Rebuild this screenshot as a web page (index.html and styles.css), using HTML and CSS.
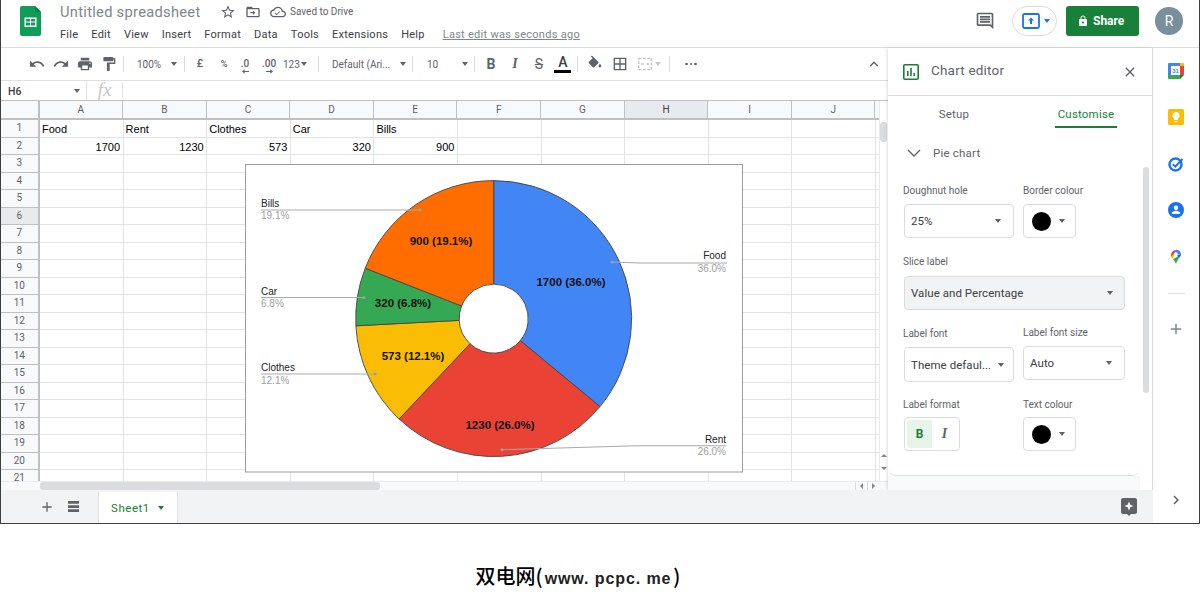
FILE: index.html
```html
<!DOCTYPE html>
<html lang="en">
<head>
<meta charset="utf-8">
<title>Untitled spreadsheet</title>
<link rel="stylesheet" href="styles.css">
</head>
<body>
<div class="app">
  <header class="header">
    <svg class="logo" viewBox="0 0 21 30"><path fill="#0f9d58" d="M2 0h13l6 6v22a2 2 0 0 1-2 2H2a2 2 0 0 1-2-2V2a2 2 0 0 1 2-2z"/><path fill="#0b8043" d="M15 0l6 6h-6z"/><path fill="#fff" d="M4.500 11.500h12v9.500h-12zM6 13v2.500h4V13zm5 0v2.500h4V13zM6 16.500V19.500h4v-3zm5 0V19.500h4v-3z" fill-rule="evenodd"/></svg>
    <div class="doc">
      <div class="doc-top">
        <span class="doc-title">Untitled spreadsheet</span>
        <svg class="ic16 star" viewBox="0 0 24 24"><path d="M22 9.240l-7.190-.62L12 2 9.190 8.630 2 9.240l5.460 4.730L5.820 21 12 17.270 18.180 21l-1.630-7.030L22 9.240zM12 15.400l-3.760 2.270 1-4.280-3.320-2.880 4.380-.38L12 6.100l1.710 4.040 4.380.38-3.320 2.880 1 4.280L12 15.400z"/></svg>
        <svg class="ic16 move" viewBox="0 0 24 24"><path d="M20 6h-8l-2-2H4c-1.100 0-2 .9-2 2v12c0 1.100.9 2 2 2h16c1.100 0 2-.9 2-2V8c0-1.100-.9-2-2-2zm0 12H4V8h16v10z"/><path d="M12 9.500l3.500 3.500-3.500 3.500V14H8v-2h4z"/></svg>
        <svg class="ic16 cloud" viewBox="0 0 24 24"><path d="M19.350 10.040C18.670 6.590 15.640 4 12 4 9.110 4 6.600 5.640 5.350 8.040 2.340 8.360 0 10.910 0 14c0 3.310 2.690 6 6 6h13c2.760 0 5-2.240 5-5 0-2.640-2.050-4.780-4.650-4.960zM19 18H6c-2.210 0-4-1.790-4-4s1.790-4 4-4h.71C7.370 7.690 9.480 6 12 6c3.040 0 5.500 2.460 5.500 5.500v.5H19c1.660 0 3 1.340 3 3s-1.340 3-3 3z"/><path d="M10 15l-2.200-2.200-1 1L10 17l5.200-5.200-1-1z"/></svg>
        <span class="saved">Saved to Drive</span>
      </div>
      <nav class="menu">
        <span>File</span><span>Edit</span><span>View</span><span>Insert</span><span>Format</span><span>Data</span><span>Tools</span><span>Extensions</span><span>Help</span>
        <a class="last-edit">Last edit was seconds ago</a>
      </nav>
    </div>
    <div class="actions">
      <svg class="comment" viewBox="0 0 24 24"><path d="M21.990 4c0-1.100-.89-2-1.990-2H4c-1.100 0-2 .9-2 2v12c0 1.100.9 2 2 2h14l4 4-.01-18zM20 4v13.170L18.830 16H4V4h16zM6 12h12v2H6zm0-3h12v2H6zm0-3h12v2H6z"/></svg>
      <div class="present">
        <svg class="present-ic" viewBox="0 0 18 16"><rect x="1" y="1" width="16" height="14" rx="1.500" fill="none" stroke="#1a73e8" stroke-width="1.800"/><path fill="#1a73e8" d="M9 4.500l3 3H10v3.500H8V7.500H6z"/></svg>
        <span class="caret blue"></span>
      </div>
      <div class="share">
        <svg class="lock" viewBox="0 0 24 24"><path d="M18 8h-1V6c0-2.760-2.240-5-5-5S7 3.240 7 6v2H6c-1.100 0-2 .9-2 2v10c0 1.100.9 2 2 2h12c1.100 0 2-.9 2-2V10c0-1.100-.9-2-2-2zm-6 9c-1.100 0-2-.9-2-2s.9-2 2-2 2 .9 2 2-.9 2-2 2zm3.100-9H8.900V6c0-1.710 1.390-3.100 3.100-3.100 1.710 0 3.100 1.390 3.100 3.100v2z"/></svg>
        <span>Share</span>
      </div>
      <div class="avatar">R</div>
    </div>
  </header>

  <div class="body">
    <div class="main">
      <div class="content">
        <section class="sheet">
          <div class="toolbar">
            <svg class="tb ic" viewBox="-5 -5 34 34"><path d="M12.500 8c-2.650 0-5.050.99-6.900 2.600L2 7v9h9l-3.620-3.620c1.390-1.160 3.160-1.880 5.120-1.880 3.540 0 6.550 2.310 7.600 5.500l2.370-.78C21.080 11.030 17.150 8 12.500 8z"/></svg>
            <svg class="tb ic" viewBox="-5 -5 34 34"><path d="M18.400 10.600C16.550 8.990 14.150 8 11.500 8c-4.650 0-8.580 3.030-9.960 7.220L3.900 16c1.050-3.190 4.050-5.500 7.600-5.500 1.950 0 3.730.72 5.120 1.880L13 16h9V7l-3.600 3.600z"/></svg>
            <svg class="tb ic" viewBox="-5 -5 34 34"><path d="M19 8H5c-1.660 0-3 1.340-3 3v6h4v4h12v-4h4v-6c0-1.660-1.340-3-3-3zm-3 11H8v-5h8v5zm3-7c-.55 0-1-.45-1-1s.45-1 1-1 1 .45 1 1-.45 1-1 1zm-1-9H6v4h12V3z"/></svg>
            <svg class="tb ic" viewBox="-5 -5 34 34"><path d="M18 4V3c0-.55-.45-1-1-1H5c-.55 0-1 .45-1 1v4c0 .55.45 1 1 1h12c.55 0 1-.45 1-1V6h1v4H9v11c0 .55.45 1 1 1h2c.55 0 1-.45 1-1v-9h8V4h-3z"/></svg>
            <i class="sep s-a"></i>
            <div class="drop d-zoom"><span>100%</span><span class="caret"></span></div>
            <i class="sep"></i>
            <span class="tb txt t-first">£</span>
            <span class="tb txt small">%</span>
            <span class="tb txt dec d1">.0<svg class="dec-arrow" viewBox="0 0 8 5"><path d="M0 2.500L3 0v2h5v1H3v2z"/></svg></span>
            <span class="tb txt dec">.00<svg class="dec-arrow" viewBox="0 0 8 5"><path d="M8 2.500L5 0v2H0v1h5v2z"/></svg></span>
            <span class="fmt">123<span class="caret"></span></span>
            <i class="sep"></i>
            <div class="drop d-font"><span>Default (Ari...</span><span class="caret"></span></div>
            <i class="sep"></i>
            <div class="drop d-size"><span>10</span><span class="caret"></span></div>
            <i class="sep"></i>
            <span class="tb txt fmt-b">B</span>
            <span class="tb txt fmt-i">I</span>
            <span class="tb txt fmt-s">S</span>
            <span class="tb txt fmt-a">A</span>
            <i class="sep s-b"></i>
            <svg class="tb ic" viewBox="-5 -5 34 34"><path d="M16.560 8.940L7.620 0 6.210 1.410l2.380 2.380-5.150 5.150c-.59.59-.59 1.540 0 2.120l5.500 5.500c.29.29.68.44 1.060.44s.77-.15 1.060-.44l5.500-5.500c.59-.58.59-1.530 0-2.120zM19 11.500s-2 2.170-2 3.500c0 1.100.9 2 2 2s2-.9 2-2c0-1.330-2-3.500-2-3.500z"/></svg>
            <svg class="tb ic bord" viewBox="-5 -5 34 34"><path d="M3 3v18h18V3H3zm8 16H5v-6h6v6zm0-8H5V5h6v6zm8 8h-6v-6h6v6zm0-8h-6V5h6v6z"/></svg>
            <svg class="tb merge" viewBox="-5 -5 34 34"><path fill="none" stroke="#c4c7c9" stroke-width="2" stroke-dasharray="4 2" d="M3 4h18v16H3z"/><path fill="none" stroke="#c4c7c9" stroke-width="2" d="M6 12h4M14 12h4"/></svg>
            <span class="caret faint"></span>
            <i class="sep s-c"></i>
            <span class="dots"><i></i><i></i><i></i></span>
            <svg class="tb ic collapse" viewBox="-5 -5 34 34"><path d="M7.410 15.410L12 10.830l4.590 4.580L18 14l-6-6-6 6z"/></svg>
          </div>
          <div class="formula">
            <div class="namebox"><span>H6</span><span class="caret"></span></div>
            <span class="fx">fx</span>
          </div>
          <div class="gridwrap">
            <div class="grid">
              <div class="colheads">
                <div class="corner"></div>
                <div class="ch">A</div><div class="ch">B</div><div class="ch">C</div><div class="ch">D</div><div class="ch">E</div><div class="ch">F</div><div class="ch">G</div><div class="ch sel">H</div><div class="ch">I</div><div class="ch">J</div>
              </div>
              <div class="row"><div class="rh">1</div><div class="rb"><div class="c">Food</div><div class="c">Rent</div><div class="c">Clothes</div><div class="c">Car</div><div class="c">Bills</div></div></div>
              <div class="row"><div class="rh">2</div><div class="rb"><div class="c n">1700</div><div class="c n">1230</div><div class="c n">573</div><div class="c n">320</div><div class="c n">900</div></div></div>
              <div class="row"><div class="rh">3</div><div class="rb"></div></div>
              <div class="row"><div class="rh">4</div><div class="rb"></div></div>
              <div class="row"><div class="rh">5</div><div class="rb"></div></div>
              <div class="row"><div class="rh sel">6</div><div class="rb"></div></div>
              <div class="row"><div class="rh">7</div><div class="rb"></div></div>
              <div class="row"><div class="rh">8</div><div class="rb"></div></div>
              <div class="row"><div class="rh">9</div><div class="rb"></div></div>
              <div class="row"><div class="rh">10</div><div class="rb"></div></div>
              <div class="row"><div class="rh">11</div><div class="rb"></div></div>
              <div class="row"><div class="rh">12</div><div class="rb"></div></div>
              <div class="row"><div class="rh">13</div><div class="rb"></div></div>
              <div class="row"><div class="rh">14</div><div class="rb"></div></div>
              <div class="row"><div class="rh">15</div><div class="rb"></div></div>
              <div class="row"><div class="rh">16</div><div class="rb"></div></div>
              <div class="row"><div class="rh">17</div><div class="rb"></div></div>
              <div class="row"><div class="rh">18</div><div class="rb"></div></div>
              <div class="row"><div class="rh">19</div><div class="rb"></div></div>
              <div class="row"><div class="rh">20</div><div class="rb"></div></div>
              <div class="row"><div class="rh">21</div><div class="rb"></div></div>
            </div>
            <div class="vscroll">
              <div class="vthumb"></div>
              <div class="varrows"><span class="tri up"></span><span class="tri down"></span></div>
            </div>
            <svg class="chart" viewBox="245 164 498 309">
              <rect class="frame" x="245.500" y="164.500" width="497" height="307.500"/>
              <g class="slices">
                <path fill="#4285f4" d="M493.700 180.600A138 138 0 0 1 600 406.600L520.300 340.600A34.500 34.500 0 0 0 493.700 284.100Z"/>
                <path fill="#ea4335" d="M600 406.600A138 138 0 0 1 399.100 419L470 343.700A34.500 34.500 0 0 0 520.300 340.600Z"/>
                <path fill="#fbbc04" d="M399.100 419A138 138 0 0 1 355.900 325.800L459.200 320.400A34.500 34.500 0 0 0 470 343.700Z"/>
                <path fill="#34a853" d="M355.900 325.800A138 138 0 0 1 365.200 268.200L461.600 306A34.500 34.500 0 0 0 459.200 320.400Z"/>
                <path fill="#ff6d01" d="M365.200 268.200A138 138 0 0 1 493.700 180.600V284.100A34.500 34.500 0 0 0 461.600 306Z"/>
              </g>
              <g class="leaders">
                <path d="M261 210H420"/><path d="M261 297.500H364"/><path d="M261 374H375"/><path d="M612 262L640 263H727"/><path d="M502 449.700L637 445.700H726"/>
              </g>
              <g class="ends">
                <circle cx="420" cy="210" r="1.500"/><circle cx="364" cy="297.500" r="1.500"/><circle cx="375" cy="374" r="1.500"/><circle cx="612" cy="262" r="1.500"/><circle cx="502" cy="449.700" r="1.500"/>
              </g>
              <text class="vl" x="441" y="245">900 (19.1%)</text>
              <text class="vl" x="403" y="307">320 (6.8%)</text>
              <text class="vl" x="413" y="360">573 (12.1%)</text>
              <text class="vl" x="500" y="429">1230 (26.0%)</text>
              <text class="vl" x="571" y="286">1700 (36.0%)</text>
              <text class="ln" x="261" y="207">Bills</text><text class="lp" x="261" y="219">19.1%</text>
              <text class="ln" x="261" y="295">Car</text><text class="lp" x="261" y="307">6.8%</text>
              <text class="ln" x="261" y="371">Clothes</text><text class="lp" x="261" y="384">12.1%</text>
              <text class="ln end" x="726" y="259">Food</text><text class="lp end" x="726" y="272">36.0%</text>
              <text class="ln end" x="726" y="443">Rent</text><text class="lp end" x="726" y="455">26.0%</text>
            </svg>
          </div>
          <div class="hscroll">
            <div class="hcorner"></div>
            <div class="htrack"><div class="hthumb"></div></div>
            <div class="harrow"><span class="tri left"></span></div>
            <div class="harrow"><span class="tri right"></span></div>
          </div>
        </section>

        <aside class="editor">
          <div class="ed-head">
            <svg class="ed-ic" viewBox="0 0 16 16"><rect x=".8" y=".8" width="14.400" height="14.400" rx="1" fill="none" stroke="#188038" stroke-width="1.600"/><path fill="#188038" d="M4 7h1.600v5H4zM7.200 4h1.600v8H7.200zM10.400 9H12v3h-1.600z"/></svg>
            <span class="ed-title">Chart editor</span>
            <svg class="ed-close" viewBox="0 0 24 24"><path d="M19 6.410L17.590 5 12 10.590 6.410 5 5 6.410 10.590 12 5 17.590 6.410 19 12 13.410 17.590 19 19 17.590 13.410 12z"/></svg>
          </div>
          <div class="tabs">
            <div class="tab"><span>Setup</span></div>
            <div class="tab on"><span>Customise</span></div>
          </div>
          <div class="card">
            <div class="acc">
              <svg class="acc-ic" viewBox="0 0 14 8"><path d="M1 1l6 6 6-6" fill="none" stroke="#5f6368" stroke-width="1.400"/></svg>
              <span>Pie chart</span>
            </div>
            <div class="frow">
              <div class="fld w110"><label>Doughnut hole</label><div class="sel-box pr-wide"><span>25%</span><span class="caret"></span></div></div>
              <div class="fld"><label>Border colour</label><div class="sel-box color"><i class="swatch"></i><span class="caret"></span></div></div>
            </div>
            <div class="frow tall">
              <div class="fld wide"><label>Slice label</label><div class="sel-box grey"><span>Value and Percentage</span><span class="caret"></span></div></div>
            </div>
            <div class="frow">
              <div class="fld w110"><label>Label font</label><div class="sel-box tall-box"><span>Theme defaul...</span><span class="caret"></span></div></div>
              <div class="fld w102 raised"><label>Label font size</label><div class="sel-box grey-pad"><span>Auto</span><span class="caret"></span></div></div>
            </div>
            <div class="frow tight">
              <div class="fld w110"><label>Label format</label>
                <div class="toggle"><span class="tg on">B</span><span class="tg it">I</span></div>
              </div>
              <div class="fld"><label>Text colour</label><div class="sel-box color"><i class="swatch"></i><span class="caret"></span></div></div>
            </div>
          </div>
          <div class="ed-foot"></div>
          <div class="ed-scroll"></div>
        </aside>
      </div>
      <footer class="tabsbar">
        <svg class="bar-ic plus" viewBox="0 0 24 24"><path d="M19 13h-6v6h-2v-6H5v-2h6V5h2v6h6z"/></svg>
        <svg class="bar-ic list" viewBox="0 0 12 12"><path d="M0 0h12v3H0zM0 4.500h12v3H0zM0 9h12v3H0z"/></svg>
        <div class="sheet-tab"><span>Sheet1</span><span class="caret green"></span></div>
        <svg class="explore" viewBox="0 0 16 18"><path fill="#5f6368" d="M2 0h12a2 2 0 0 1 2 2v12a2 2 0 0 1-2 2h-4l-2 2-2-2H2a2 2 0 0 1-2-2V2a2 2 0 0 1 2-2z"/><path fill="#fff" d="M8 3.500l1.300 3.200L12.500 8 9.300 9.300 8 12.500 6.700 9.300 3.500 8l3.200-1.300z"/></svg>
      </footer>
    </div>
    <aside class="sidebar">
      <svg class="app-ic" viewBox="0 0 16 16"><path fill="#4285f4" d="M1 0h11v3H3v9H0V1a1 1 0 0 1 1-1z"/><path fill="#fbbc04" d="M12 0h3a1 1 0 0 1 1 1v2h-4z"/><path fill="#ea4335" d="M12 3h4v9h-4z"/><path fill="#34a853" d="M3 12h9v4H1a1 1 0 0 1-1-1v-3z"/><path fill="#188038" d="M12 12h4l-4 4z"/><rect x="3" y="3" width="9" height="9" fill="#fff"/><text class="cal-num" x="7.500" y="10.200">31</text></svg>
      <svg class="app-ic" viewBox="0 0 16 16"><rect width="16" height="16" rx="1.500" fill="#fbbc04"/><path fill="#fff" d="M8 3a3.500 3.500 0 0 0-2 6.400V11h4V9.400A3.500 3.500 0 0 0 8 3zM6.500 12h3v1h-3z"/></svg>
      <svg class="app-ic" viewBox="0 0 16 16"><circle cx="7.500" cy="8.500" r="6" fill="none" stroke="#1a73e8" stroke-width="2.400"/><path d="M4.800 8.200l2.500 2.400L14.500 3" fill="none" stroke="#1a73e8" stroke-width="2"/></svg>
      <svg class="app-ic" viewBox="0 0 16 16"><circle cx="8" cy="8" r="8" fill="#1a73e8"/><circle cx="8" cy="5.800" r="2.200" fill="#fff"/><path fill="#fff" d="M3.800 11.500c0-1.900 2.800-2.700 4.200-2.700s4.200.8 4.200 2.700V12H3.800z"/></svg>
      <svg class="app-ic" viewBox="0 0 16 16"><path fill="#34a853" d="M8 16c-1-2.500-2-3.500-3-5l3-1.500 3-1.500c.5 1.500-.2 2.500-1 3.700C9 13 8.600 14.500 8 16z"/><path fill="#fbbc04" d="M3 8.500l3.500-3-1.500 5.500C4 10 3.300 9.500 3 8.500z"/><path fill="#ea4335" d="M3 8.500C2.500 5.500 4.500 3 6 2.500l2 1.500-2 2z"/><path fill="#4285f4" d="M6 2.500C9 .8 12.500 2.500 13 6L9.500 7z"/><path fill="#1a73e8" d="M13 6c.2 1.500-.5 2.500-2 4L9 7.500z"/><circle cx="8" cy="6" r="1.800" fill="#fff"/></svg>
      <i class="side-line"></i>
      <svg class="side-plus" viewBox="0 0 24 24"><path d="M19 13h-6v6h-2v-6H5v-2h6V5h2v6h6z"/></svg>
      <svg class="side-chev" viewBox="0 0 24 24"><path d="M10 6L8.590 7.410 13.170 12l-4.580 4.590L10 18l6-6z"/></svg>
    </aside>
  </div>
</div>
<div class="caption">双电网(<span class="cap-latin">www. pcpc. me</span>)</div>
</body>
</html>
```
FILE: styles.css
```css
* { box-sizing: border-box; }
html, body { margin: 0; padding: 0; background: #fff; }
body { width: 1200px; height: 600px; overflow: hidden; font-family: Roboto, "Liberation Sans", sans-serif; color: #3c4043; }
i { font-style: normal; display: block; }

.app { width: 1200px; height: 524px; border: 1px solid #3c4043; border-top: 0; display: flex; flex-direction: column; overflow: hidden; }

/* header */
.header { height: 48px; flex: none; border-bottom: 1px solid #dadce0; display: flex; align-items: flex-start; position: relative; }
.logo { width: 21px; height: 30px; margin: 6px 0 0 19px; flex: none; }
.doc { margin-left: 19px; padding-top: 2px; }
.doc-top { display: flex; align-items: center; height: 19px; }
.doc-title { font-size: 14.700px; letter-spacing: .28px; color: #80868b; width: 160px; }
.ic16 { width: 16px; height: 16px; fill: #5f6368; flex: none; }
.move { margin-left: 9px; }
.cloud { margin-left: 9px; }
.saved { font-size: 10px; color: #5f6368; margin-left: 4px; }
.menu { display: flex; gap: 13px; margin-top: 6px; font-size: 11px; letter-spacing: .25px; color: #3c4043; line-height: 16px; }
.last-edit { color: #80868b; text-decoration: underline; margin-left: 5px; letter-spacing: .28px; }
.actions { margin-left: auto; display: flex; align-items: center; height: 30px; margin-top: 6px; }
.comment { width: 20px; height: 20px; fill: #5f6368; margin-right: 17px; }
.present { width: 45px; height: 30px; border: 1px solid #dadce0; border-radius: 15px; display: flex; align-items: center; padding-left: 9px; margin-right: 9px; }
.present-ic { width: 18px; height: 16px; margin-right: 4px; }
.share { width: 73px; height: 30px; background: #188038; border-radius: 3px; color: #fff; font-size: 12px; font-weight: 700; display: flex; align-items: center; padding-left: 11px; margin-right: 16px; }
.lock { width: 12px; height: 12px; fill: #fff; margin-right: 4px; }
.avatar { width: 28px; height: 28px; border-radius: 50%; background: #78909c; color: #fff; font-size: 14px; display: flex; align-items: center; justify-content: center; margin-right: 16px; }

.caret { display: inline-block; width: 0; height: 0; border: 3.500px solid transparent; border-top: 4px solid #5f6368; border-bottom: 0; flex: none; }
.caret.blue { border-top-color: #1a73e8; }
.caret.green { border-top-color: #188038; }
.caret.faint { border-top-color: #c4c7c9; margin-left: -2px; }

.body { flex: 1; display: flex; min-height: 0; }
.main { width: 1152px; display: flex; flex-direction: column; }
.content { height: 442px; display: flex; }

/* sheet */
.sheet { width: 887px; flex: none; display: flex; flex-direction: column; position: relative; }
.toolbar { height: 33px; flex: none; border-bottom: 1px solid #e0e0e0; display: flex; align-items: center; padding-left: 24px; }
.tb { width: 24px; height: 24px; flex: none; display: block; }
.ic { fill: #5f6368; }
.sep { width: 1px; height: 16px; background: #dadce0; flex: none; }
.s-a { margin-left: 2px; }
.drop { display: flex; align-items: center; justify-content: space-between; font-size: 10px; color: #5f6368; flex: none; }
.d-zoom { width: 60px; padding: 0 7px 0 13px; }
.d-font { width: 93px; padding: 0 6px 0 13px; }
.d-size { width: 61px; padding: 0 6px 0 14px; }
.txt { font-size: 10px; font-weight: 500; color: #5f6368; text-align: center; line-height: 24px; position: relative; }
.t-first { margin-left: 3px; font-size: 11px; }
.small { font-size: 9px; }
.dec { font-size: 10px; line-height: 23px; }
.d1 { margin-left: -3px; }
.dec-arrow { position: absolute; width: 7px; height: 5px; left: 9px; top: 17px; fill: #5f6368; }
.fmt { display: flex; align-items: center; gap: 1px; font-size: 10px; color: #5f6368; width: 37px; flex: none; padding-left: 2px; }
.fmt-b { margin-left: 4px; font-size: 14px; font-weight: 700; }
.fmt-i { font-size: 14px; font-weight: 700; font-style: italic; font-family: "Liberation Serif", serif; }
.fmt-s { font-size: 14px; font-weight: 400; text-decoration: line-through; }
.fmt-a { font-size: 14px; font-weight: 500; color: #3c4043; line-height: 20px; }
.fmt-a::after { content: ""; position: absolute; left: 3px; top: 18px; width: 17px; height: 3px; background: #000; }
.s-b { margin-left: 2px; margin-right: 5px; }
.bord { margin-left: 1px; }
.merge { margin-left: 1px; }
.s-c { margin-left: 8px; margin-right: 9px; }
.dots { display: flex; gap: 2px; width: 24px; justify-content: center; flex: none; }
.dots i { width: 2.500px; height: 2.500px; background: #5f6368; border-radius: 50%; }
.collapse { margin-left: auto; margin-right: 2px; }

.formula { height: 20px; flex: none; border-bottom: 1px solid #c0c0c0; display: flex; align-items: center; }
.namebox { width: 86px; height: 19px; flex: none; display: flex; align-items: center; justify-content: space-between; padding: 1px 6px 0 7px; font-size: 10.500px; font-weight: 500; color: #3c4043; border-right: 1px solid #e0e0e0; }
.fx { width: 36px; height: 15px; font: italic 19px/14px "Liberation Serif", serif; color: #c8c8c8; text-align: center; border-right: 1px solid #e0e0e0; }

.gridwrap { height: 380px; flex: none; display: flex; position: relative; overflow: hidden; }
.grid { width: 878px; flex: none; overflow: hidden; }
.colheads { height: 19px; display: flex; border-bottom: 2px solid #c0c0c0; background: #f8f9fa; }
.corner { width: 38.500px; flex: none; border-right: 2px solid #c0c0c0; }
.ch { width: 83.600px; flex: none; border-right: 1px solid #c0c0c0; font-size: 10px; line-height: 17px; text-align: center; color: #5f6368; }
.ch.sel { background: #e8eaed; color: #3c4043; }
.row { height: 17.530px; display: flex; }
.rh { width: 38.500px; flex: none; background: #f8f9fa; border-right: 2px solid #c0c0c0; border-bottom: 1px solid #c0c0c0; font-size: 10px; line-height: 15px; text-align: center; color: #5f6368; }
.rh.sel { background: #e8eaed; }
.rb { flex: 1; display: flex; border-bottom: 1px solid #e2e3e3; background: repeating-linear-gradient(to right, transparent 0 82.600px, #e2e3e3 82.600px 83.600px); }
.c { width: 83.600px; flex: none; padding: 0 3px 0 2.500px; font: 11px/18px "Liberation Sans", Arial, sans-serif; color: #000; }
.c.n { text-align: right; }

.vscroll { width: 9px; flex: none; border-left: 1px solid #e8eaed; position: relative; }
.vthumb { width: 7px; height: 20px; margin-top: 21px; background: #dadce0; border-radius: 3px; }
.varrows { position: absolute; left: 0; right: 0; bottom: 6px; height: 26px; display: flex; flex-direction: column; align-items: center; justify-content: space-around; }
.tri { display: block; width: 0; height: 0; border: 3px solid transparent; }
.tri.up { border-top: 0; border-bottom: 3px solid #80868b; }
.tri.down { border-bottom: 0; border-top: 3px solid #80868b; }
.tri.left { border-left: 0; border-right: 3px solid #80868b; }
.tri.right { border-right: 0; border-left: 3px solid #80868b; }

.chart { position: absolute; left: 244px; top: 63px; width: 498px; height: 309px; }
.frame { fill: #fff; stroke: #9e9e9e; stroke-width: 1; }
.slices path { stroke: #444; stroke-width: .9; }
.leaders path { fill: none; stroke: #a9a9a9; stroke-width: 1.100; }
.ends circle { fill: #9e9e9e; }
.vl { font: 700 11.500px "Liberation Sans", Arial, sans-serif; text-anchor: middle; fill: #111; }
.ln { font: 10px "Liberation Sans", Arial, sans-serif; fill: #222; }
.lp { font: 10px "Liberation Sans", Arial, sans-serif; fill: #9e9e9e; }
.end { text-anchor: end; }

.hscroll { height: 9px; flex: none; display: flex; background: #f8f9fa; border-top: 1px solid #e8eaed; }
.hcorner { width: 39px; flex: none; }
.htrack { width: 815px; flex: none; }
.hthumb { width: 340px; height: 8px; background: #dadce0; border-radius: 3px; }
.harrow { width: 12px; flex: none; border-left: 1px solid #dadce0; display: flex; align-items: center; justify-content: center; }

/* chart editor */
.editor { width: 265px; flex: none; border-right: 1px solid #dadce0; position: relative; display: flex; flex-direction: column; box-shadow: -1px 0 3px rgba(60,64,67,.18); background: #fff; z-index: 1; }
.ed-head { height: 48px; flex: none; border-bottom: 1px solid #dadce0; display: flex; align-items: center; padding-left: 15px; }
.ed-ic { width: 16px; height: 16px; margin-right: 12px; }
.ed-title { font-size: 13.500px; letter-spacing: .2px; color: #5f6368; margin-bottom: 3px; }
.ed-close { width: 16px; height: 16px; fill: #5f6368; margin-left: auto; margin-right: 14px; }
.tabs { height: 35px; flex: none; display: flex; }
.tab { width: 132px; text-align: center; font-size: 11.500px; letter-spacing: .2px; color: #5f6368; padding-top: 11px; }
.tab span { display: inline-block; height: 21px; padding: 0 3px; }
.tab.on { color: #188038; }
.tab.on span { border-bottom: 2px solid #188038; }
.card { width: 252px; height: 345px; flex: none; border-bottom: 1px solid #e0e0e0; border-radius: 0 0 8px 8px; padding-left: 16px; }
.acc { height: 53px; padding-bottom: 9px; display: flex; align-items: center; font-size: 11.500px; letter-spacing: .2px; color: #5f6368; }
.acc-ic { width: 14px; height: 8px; margin-left: 3px; margin-right: 12px; }
.frow { display: flex; gap: 9px; margin-bottom: 16px; height: 55px; }
.frow.tall { height: 56px; }
.fld label { display: block; font-size: 10px; line-height: 14px; color: #5f6368; margin: 0 0 6px -1px; }
.fld + .fld label { margin-left: 0; }
.tall .fld label { margin-bottom: 7px; }
.tight .fld label { margin-bottom: 5px; }
.raised { margin-top: -1px; }
.w110 { width: 110px; }
.w102 { width: 102px; }
.wide { width: 221px; }
.sel-box { height: 34px; border: 1px solid #dadce0; border-radius: 4px; display: flex; align-items: center; justify-content: space-between; padding: 0 9px 0 6px; font-size: 11.500px; letter-spacing: .05px; color: #3c4043; }
.sel-box.tall-box { height: 35px; }
.sel-box.grey { background: #f1f3f4; padding-right: 11px; }
.sel-box.grey-pad { padding-right: 12px; }
.sel-box.pr-wide { padding-right: 12px; }
.sel-box.color { width: 53px; padding: 0 10px 0 8px; }
.swatch { width: 19px; height: 19px; border-radius: 50%; background: #000; }
.toggle { width: 56px; height: 34px; border: 1px solid #dadce0; border-radius: 4px; display: flex; padding: 2px; }
.tg { width: 26px; border-radius: 2px; text-align: center; font-size: 12px; line-height: 28px; font-weight: 700; color: #5f6368; }
.tg.on { background: #e6f4ea; color: #188038; }
.tg.it { font: italic 700 14px/28px "Liberation Serif", serif; }
.ed-foot { flex: 1; width: 252px; background: #f8f9fa; }
.ed-scroll { position: absolute; left: 255px; top: 119px; width: 6px; height: 226px; background: #dadce0; border-radius: 3px; }

/* bottom */
.tabsbar { height: 33px; flex: none; background: #f1f3f4; display: flex; align-items: center; position: relative; z-index: 2; }
.bar-ic { flex: none; fill: #5f6368; }
.plus { width: 16px; height: 16px; margin-left: 38px; }
.list { width: 11px; height: 11px; margin-left: 13px; }
.sheet-tab { margin-left: 19px; width: 80px; height: 31px; align-self: flex-start; margin-top: 2px; background: #fff; border-left: 1px solid #e0e0e0; border-right: 1px solid #e0e0e0; display: flex; align-items: center; padding-left: 12px; gap: 8px; font-size: 11.500px; letter-spacing: .55px; color: #188038; }
.explore { width: 16px; height: 18px; margin-left: auto; margin-right: 16px; }

/* sidebar */
.sidebar { flex: 1; display: flex; flex-direction: column; align-items: center; padding-top: 15px; background: #fff; position: relative; }
.app-ic { width: 16px; height: 16px; flex: none; margin-bottom: 30.300px; }
.cal-num { font: 700 6px "Liberation Sans", sans-serif; fill: #4285f4; text-anchor: middle; }
.side-line { width: 17px; height: 1px; background: #dadce0; margin-top: -1px; }
.side-plus { width: 18px; height: 18px; fill: #80868b; margin-top: 26px; }
.side-chev { width: 18px; height: 18px; fill: #5f6368; margin-top: auto; margin-bottom: 14px; }

.caption { width: 1200px; height: 76px; text-align: center; padding: 37px 44px 0 0; font: 500 20px/30px "Noto Sans CJK SC", "Liberation Sans", sans-serif; color: #000; }
.cap-latin { font: 700 16px/30px "Liberation Sans", Arial, sans-serif; letter-spacing: .9px; color: #222; margin: 0 2px; }
```
